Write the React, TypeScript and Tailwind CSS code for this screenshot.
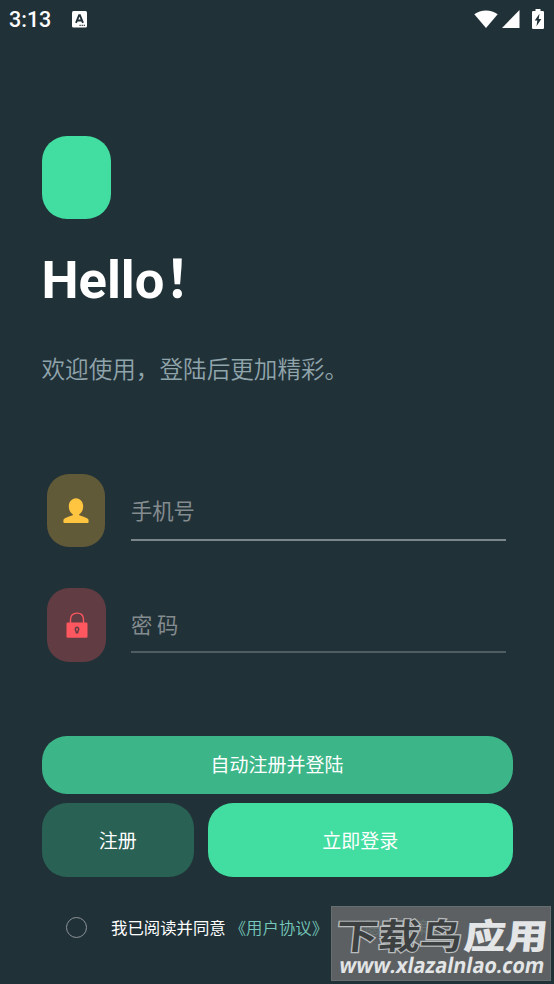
import { useState } from 'react'

const UserIcon = () => (
  <svg width="26" height="26" viewBox="0 0 26 26" fill="#ffc440">
    <path d="M13 0.3C8.8 0.3 5.8 3.9 5.8 8.6C5.8 12 7.5 14.9 9.8 16.3V17.3C6.5 18.2 4 19.2 2 20.3C0.8 21 0.4 21.6 0.4 22.8V24C0.4 24.6 0.9 25 1.5 25H24.5C25.1 25 25.6 24.6 25.6 24V22.8C25.6 21.6 25.2 21 24 20.3C22 19.2 19.5 18.2 16.2 17.3V16.3C18.5 14.9 20.2 12 20.2 8.6C20.2 3.9 17.2 0.3 13 0.3Z" />
  </svg>
)

const LockIcon = () => (
  <svg width="22" height="26" viewBox="0 0 22 26">
    <path d="M4.5 11V7.4C4.5 3.6 7 1.1 11 1.1C15 1.1 17.5 3.6 17.5 7.4V11" fill="none" stroke="#ff575f" strokeWidth="1.4" />
    <rect x="0.5" y="10.5" width="21" height="15.2" rx="1.2" fill="#ff575f" />
    <path d="M11 15.2A2 2 0 0 1 12.2 18.5L11.6 20.8H10.4L9.8 18.5A2 2 0 0 1 11 15.2Z" fill="none" stroke="#613c43" strokeWidth="1.5" />
  </svg>
)

function StatusBar() {
  return (
    <div className="flex h-[38px] items-center pr-[10px] pl-[9px]">
      <span className="w-[63px] pt-px font-[Roboto] text-[21.5px] leading-[38px] font-medium">3:13</span>
      <svg width="15" height="17" viewBox="0 0 15 17">
        <rect width="15" height="16.5" rx="1.5" fill="#fff" />
        <path d="M4 11.8L7.1 4.2H7.9L11 11.8M5.3 9.5H9.7" fill="none" stroke="#213138" strokeWidth="1.9" />
        <path d="M7.5 14.3H13" stroke="#213138" strokeWidth="1.2" strokeDasharray="1.2 0.9" />
      </svg>
      <div className="ml-auto flex items-center">
        <svg width="24" height="19" viewBox="0 0 24 19" fill="#fff">
          <path d="M0.3 4.3C6.5 -0.9 17.5 -0.9 23.7 4.3L12 18Z" />
        </svg>
        <svg className="ml-[4px]" width="18" height="18" viewBox="0 0 18 18" fill="#fff">
          <path d="M17.5 0V18H0Z" />
        </svg>
        <svg className="ml-[12px]" width="12" height="20" viewBox="0 0 12 20">
          <path d="M3.5 0H8.5V2H10.8Q12 2 12 3.2V18.8Q12 20 10.8 20H1.2Q0 20 0 18.8V3.2Q0 2 1.2 2H3.5Z" fill="#fff" />
          <path d="M7.5 4.8L2.7 11.6H5.3L4.5 17.2L9.3 10H6.7Z" fill="#213138" />
        </svg>
      </div>
    </div>
  )
}

function Watermark() {
  return (
    <div className="absolute top-[906px] left-[331px] h-[75px] w-[220px] overflow-hidden border border-[#686d6f] bg-[#5c6062]">
      <svg width="218" height="73" viewBox="0 0 218 73" fontFamily="'Noto Sans CJK SC', sans-serif">
        <text x="16" y="26" fontSize="16.4" fill="#708683" opacity="0.5">《隐私政策》</text>
        <g fontSize="35" transform="matrix(1.2 0 -0.1 1 0 0)">
          <text x="6" y="42" fontWeight="700" fill="#3d4041" stroke="#b8bcbd" strokeWidth="2.4" paintOrder="stroke">下载鸟</text>
          <text x="112.5" y="42" fontWeight="900" fill="#e3e5e6">应用</text>
        </g>
        <text x="18" y="66" textLength="205" lengthAdjust="spacingAndGlyphs" fontFamily="'Open Sans', sans-serif" fontSize="21.5" fontWeight="700" fill="#e3e5e6" transform="skewX(-10)">www.xlazalnlao.com</text>
      </svg>
    </div>
  )
}

export default function App() {
  const [phone, setPhone] = useState('')
  const [password, setPassword] = useState('')
  const [agreed, setAgreed] = useState(false)

  return (
    <div className="relative h-[984px] w-[554px] overflow-hidden bg-[#213138] font-['Noto_Sans_CJK_SC',sans-serif] text-white">
      <StatusBar />

      <div className="pt-[98px] pr-[41px] pl-[41.5px]">
        <div className="h-[83px] w-[69.5px] rounded-[25px] bg-[#42dda0]" />
        <h1 className="mt-[29px] flex h-[64px] items-center font-[Roboto,'Noto_Sans_CJK_SC',sans-serif] text-[52.5px] leading-[64px] font-bold whitespace-nowrap">Hello！</h1>
        <p className="mt-[36px] h-[41px] text-[23.6px] leading-[40px] font-[350] whitespace-nowrap text-[#90a4ab]">欢迎使用，登陆后更加精彩。</p>
      </div>

      <form onSubmit={e => e.preventDefault()}>
        <div className="mt-[85px] ml-[47px] flex h-[73px]">
          <div className="flex w-[58px] items-center justify-center rounded-[22px] bg-[#615a39]">
            <UserIcon />
          </div>
          <input value={phone} onChange={e => setPhone(e.target.value)} placeholder="手机号" className="ml-[26px] h-[67px] w-[375px] border-b-2 border-[#7b868a] pt-[5px] text-[21.3px] outline-none placeholder:text-[#848c8f]" />
        </div>
        <div className="mt-[41px] ml-[47px] flex h-[74px]">
          <div className="flex w-[59px] items-center justify-center rounded-[22px] bg-[#613c43]">
            <LockIcon />
          </div>
          <input value={password} onChange={e => setPassword(e.target.value)} placeholder="密 码" className="ml-[25px] h-[65px] w-[375px] border-b-2 border-[#4f5c61] pt-[8px] text-[21.3px] outline-none placeholder:text-[#848c8f]" />
        </div>

        <div className="mt-[73.5px] ml-[41.5px] w-[471px] text-[19px]">
          <button className="block h-[58.5px] w-full rounded-[25px] bg-[#3cb688] pb-[2px]">自动注册并登陆</button>
          <div className="mt-[9px] flex h-[74px] gap-[14px]">
            <button className="w-[152.5px] rounded-[25px] bg-[#296154]">注册</button>
            <button className="flex-1 rounded-[25px] bg-[#42dda0]">立即登录</button>
          </div>
        </div>

        <div className="mt-[36px] ml-[65.5px] flex h-[28px] items-center text-[16.4px] whitespace-nowrap">
          <button type="button" onClick={() => setAgreed(!agreed)} className={['h-[21px] w-[21px] rounded-full border', agreed ? 'border-[#42dda0] bg-[#42dda0]' : 'border-[#8d9497]'].join(' ')} />
          <span className="ml-[24.5px]">我已阅读并同意</span>
          <span className="ml-[4px] font-[350] text-[#75c8bb]">《用户协议》</span>
        </div>
      </form>

      <Watermark />
    </div>
  )
}
